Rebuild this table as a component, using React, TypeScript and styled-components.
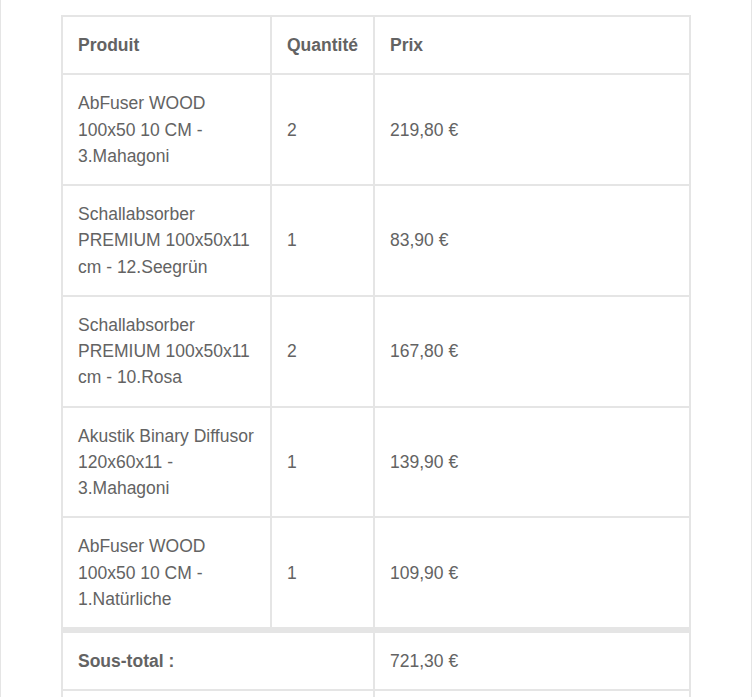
import React from 'react';
import styled, { createGlobalStyle } from 'styled-components';

const GlobalStyle = createGlobalStyle`
  body {
    margin: 0;
    background: #ffffff;
  }
`;

const Wrapper = styled.div`
  width: 752px;
  box-sizing: border-box;
  border-left: 1px solid #e5e5e5;
  border-right: 1px solid #e5e5e5;
  padding: 15px 60px 40px 60px;
  background: #ffffff;
`;

const OrderTable = styled.table`
  width: 630px;
  table-layout: fixed;
  border-collapse: separate;
  border-spacing: 0;
  border: 1px solid #e5e5e5;
  color: #636363;
  font-family: 'Liberation Sans', Arial, Helvetica, sans-serif;
  font-size: 17.5px;
  line-height: 1.5;
`;

const HeadCell = styled.th<{ $w: number }>`
  width: ${(p) => p.$w}px;
  box-sizing: border-box;
  border: 1px solid #e5e5e5;
  padding: 15px;
  text-align: left;
  vertical-align: middle;
  font-weight: bold;
`;

const Cell = styled.td<{ $thick?: boolean }>`
  border: 1px solid #e5e5e5;
  border-top-width: ${(p) => (p.$thick ? '5px' : '1px')};
  padding: 15px;
  text-align: left;
  vertical-align: middle;
  word-wrap: break-word;
`;

const LabelCell = styled(Cell).attrs({ as: 'th' })`
  font-weight: bold;
`;

type Item = { name: string; qty: number; price: string };

const items: Item[] = [
  { name: 'AbFuser WOOD 100x50 10 CM - 3.Mahagoni', qty: 2, price: '219,80 €' },
  { name: 'Schallabsorber PREMIUM 100x50x11 cm - 12.Seegrün', qty: 1, price: '83,90 €' },
  { name: 'Schallabsorber PREMIUM 100x50x11 cm - 10.Rosa', qty: 2, price: '167,80 €' },
  { name: 'Akustik Binary Diffusor 120x60x11 - 3.Mahagoni', qty: 1, price: '139,90 €' },
  { name: 'AbFuser WOOD 100x50 10 CM - 1.Natürliche', qty: 1, price: '109,90 €' },
];

const totals = [
  { label: 'Sous-total :', value: '721,30 €' },
  { label: 'Total :', value: '721,30 €' },
];

const App: React.FC = () => {
  return (
    <>
      <GlobalStyle />
      <Wrapper>
        <OrderTable>
          <thead>
            <tr>
              <HeadCell $w={209}>Produit</HeadCell>
              <HeadCell $w={103}>Quantité</HeadCell>
              <HeadCell $w={316}>Prix</HeadCell>
            </tr>
          </thead>
          <tbody>
            {items.map((item, i) => (
              <tr key={i}>
                <Cell>{item.name}</Cell>
                <Cell>{item.qty}</Cell>
                <Cell>{item.price}</Cell>
              </tr>
            ))}
          </tbody>
          <tfoot>
            {totals.map((t, i) => (
              <tr key={t.label}>
                <LabelCell colSpan={2} $thick={i === 0}>
                  {t.label}
                </LabelCell>
                <Cell $thick={i === 0}>{t.value}</Cell>
              </tr>
            ))}
          </tfoot>
        </OrderTable>
      </Wrapper>
    </>
  );
};

export default App;
